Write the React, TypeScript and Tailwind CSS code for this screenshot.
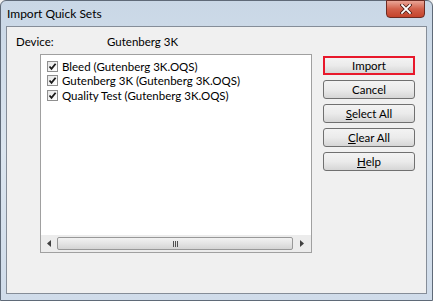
import React from "react";

const font = { fontFamily: 'Lato, "Noto Sans", Arial, sans-serif' };

function Check() {
  return (
    <div className="w-[11px] h-[11px] border border-[#8f8f8f] bg-gradient-to-br from-[#e6e6e6] to-[#ffffff] flex items-center justify-center shrink-0">
      <svg width="9" height="9" viewBox="0 0 9 9">
        <path d="M1.5 4.5 L3.5 6.8 L7.6 1.8" fill="none" stroke="#1a1a1a" strokeWidth="1.8" />
      </svg>
    </div>
  );
}

function Btn({ label, u, red }: { label: string; u?: number; red?: boolean }) {
  const text =
    u === undefined ? (
      label
    ) : (
      <>
        {label.slice(0, u)}
        <span className="underline underline-offset-[1px]">{label[u]}</span>
        {label.slice(u + 1)}
      </>
    );
  return (
    <div
      className={
        "w-[92px] h-[19px] flex items-center justify-center text-[11.5px] leading-none text-black rounded-[3px] bg-gradient-to-b from-[#f3f3f3] via-[#ebebeb] to-[#d6d6d6] " +
        (red ? "border-2 border-[#e8182b] rounded-none" : "border border-[#707070]")
      }
    >
      {text}
    </div>
  );
}

export default function App() {
  return (
    <div style={font} className="w-[433px] h-[301px] bg-[#f0f0f0]">
      <div className="relative w-[433px] h-[301px] rounded-t-[6px] border border-[#5f6a78] bg-gradient-to-b from-[#c9d7e6] via-[#dbe5ef] to-[#d0dcea] flex flex-col">
        <div className="h-[25px] flex items-center pl-[6px] text-[12px] leading-none text-black">Import Quick Sets</div>
        <div className="absolute top-[-1px] right-[7px] w-[39px] h-[18px] rounded-b-[4px] border border-[#6d2b22] bg-gradient-to-b from-[#e9a597] via-[#d2604a] to-[#c4432b] flex items-center justify-center">
          <svg width="12" height="10" viewBox="0 0 12 10">
            <path d="M2 1 L10 9 M10 1 L2 9" stroke="#4a1a12" strokeWidth="3.4" strokeLinecap="square" />
            <path d="M2 1 L10 9 M10 1 L2 9" stroke="#ffffff" strokeWidth="1.8" strokeLinecap="square" />
          </svg>
        </div>
        <div className="mx-[5px] h-[268px] border border-[#858d98] bg-[#f0f0f0] flex flex-col">
          <div className="h-[14px] mt-[8px] flex items-center text-[11.5px] leading-none text-black">
            <span className="pl-[9px] w-[100px]">Device:</span>
            <span>Gutenberg 3K</span>
          </div>
          <div className="flex mt-[5px]">
            <div className="ml-[33px] w-[272px] h-[199px] border border-[#a0a0a0] bg-white flex flex-col">
              <div className="flex-1 flex flex-col pt-[4px] pl-[6px] text-[11.5px] leading-none text-black">
                {[
                  "Bleed (Gutenberg 3K.OQS)",
                  "Gutenberg 3K (Gutenberg 3K.OQS)",
                  "Quality Test (Gutenberg 3K.OQS)",
                ].map((t) => (
                  <div key={t} className="h-[14.5px] flex items-center gap-[4px]">
                    <Check />
                    <span>{t}</span>
                  </div>
                ))}
              </div>
              <div className="h-[17px] bg-[#ececec] flex items-center">
                <div className="w-[16px] flex items-center justify-center">
                  <svg width="4" height="7" viewBox="0 0 4 7"><path d="M4 0 L0 3.5 L4 7 Z" fill="#404040" /></svg>
                </div>
                <div className="flex-1 h-[13px] rounded-[2px] border border-[#989898] bg-gradient-to-b from-[#f2f2f2] via-[#e4e4e4] to-[#d4d4d4] flex items-center justify-center">
                  <div className="w-[1px] h-[6px] bg-[#505050]" />
                  <div className="w-[1px] h-[6px] bg-[#505050] ml-[1px]" />
                  <div className="w-[1px] h-[6px] bg-[#505050] ml-[1px]" />
                </div>
                <div className="w-[18px] flex items-center justify-center">
                  <svg width="4" height="7" viewBox="0 0 4 7"><path d="M0 0 L4 3.5 L0 7 Z" fill="#404040" /></svg>
                </div>
              </div>
            </div>
            <div className="ml-[11px] mt-[2px] flex flex-col gap-[5px]">
              <Btn label="Import" red />
              <Btn label="Cancel" />
              <Btn label="Select All" u={0} />
              <Btn label="Clear All" u={0} />
              <Btn label="Help" u={0} />
            </div>
          </div>
        </div>
      </div>
    </div>
  );
}
